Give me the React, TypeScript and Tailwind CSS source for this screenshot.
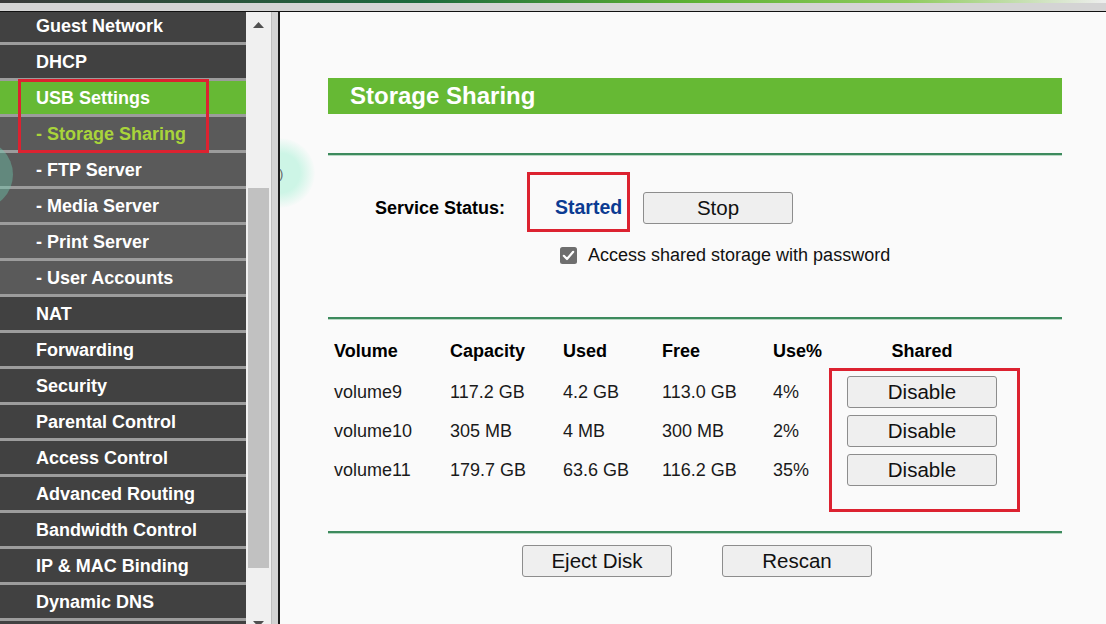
import React from "react";

type Item = { label: string; kind: "main" | "sub" | "green" | "active" };

const items: Item[] = [
  { label: "Guest Network", kind: "main" },
  { label: "DHCP", kind: "main" },
  { label: "USB Settings", kind: "green" },
  { label: "- Storage Sharing", kind: "active" },
  { label: "- FTP Server", kind: "sub" },
  { label: "- Media Server", kind: "sub" },
  { label: "- Print Server", kind: "sub" },
  { label: "- User Accounts", kind: "sub" },
  { label: "NAT", kind: "main" },
  { label: "Forwarding", kind: "main" },
  { label: "Security", kind: "main" },
  { label: "Parental Control", kind: "main" },
  { label: "Access Control", kind: "main" },
  { label: "Advanced Routing", kind: "main" },
  { label: "Bandwidth Control", kind: "main" },
  { label: "IP & MAC Binding", kind: "main" },
  { label: "Dynamic DNS", kind: "main" },
  { label: "", kind: "main" },
];

const kindClass: Record<Item["kind"], string> = {
  main: "bg-[#414141] text-white",
  sub: "bg-[#5a5a5a] text-white",
  green: "bg-[#66b934] text-white",
  active: "bg-[#5a5a5a] text-[#a9d43a]",
};

const rows = [
  ["volume9", "117.2 GB", "4.2 GB", "113.0 GB", "4%"],
  ["volume10", "305 MB", "4 MB", "300 MB", "2%"],
  ["volume11", "179.7 GB", "63.6 GB", "116.2 GB", "35%"],
];

function Rule() {
  return (
    <div className="flex flex-col w-[734px]">
      <div className="h-[2px] bg-[#3d8a5d]" />
      <div className="h-px bg-[#b9d8c4]" />
    </div>
  );
}

function Btn({ children, className = "" }: { children: React.ReactNode; className?: string }) {
  return (
    <button
      className={`w-[150px] h-[32px] bg-[#efefef] border border-[#8d8d8d] rounded-[3px] text-[20.5px] text-[#111] leading-none flex items-center justify-center ${className}`}
    >
      {children}
    </button>
  );
}

export default function App() {
  return (
    <div className="w-[1106px] h-[624px] overflow-hidden flex flex-col bg-[#fafafa] font-['Liberation_Sans',Arial,sans-serif] relative">
      {/* top bar */}
      <div className="h-[3px] bg-[linear-gradient(90deg,#3a3a3a_0%,#1d6a3d_38%,#5cb033_62%,#8fcb5e_82%,#eeeeee_100%)]" />
      <div className="h-[8px] bg-[#d4d4d4]" />
      <div className="h-px bg-[#111]" />

      <div className="flex flex-1 min-h-0">
        {/* sidebar */}
        <div className="w-[246px] overflow-hidden relative">
          <div className="flex flex-col mt-[-3px]">
            {items.map((it, i) => (
              <div
                key={i}
                className={`h-[36px] shrink-0 border-b-[3px] border-[#9c9c9c] flex items-center pl-[36px] pt-[2px] text-[18px] font-bold ${kindClass[it.kind]}`}
              >
                {it.label}
              </div>
            ))}
          </div>
          {/* red annotation */}
          <div className="absolute left-[18px] top-[67px] w-[191px] h-[74px] border-[3px] border-[#dc2230]" />
          {/* floating circle */}
          <div className="absolute left-[-56px] top-[128px] w-[69px] h-[69px] rounded-full bg-[rgba(110,200,175,0.42)]" />
        </div>

        {/* scrollbar */}
        <div className="w-[25px] bg-[#f0f0f0] flex flex-col items-center relative">
          <svg width="11" height="7" viewBox="0 0 11 7" className="mt-[10px]">
            <polygon points="0,6 5.5,0 11,6" fill="#505050" />
          </svg>
          <div className="absolute left-[2px] top-[176px] w-[21px] h-[380px] bg-[#c1c1c1]" />
          <svg width="11" height="7" viewBox="0 0 11 7" className="mt-auto mb-[-4px]">
            <polygon points="0,0 5.5,6 11,0" fill="#505050" />
          </svg>
        </div>
        <div className="w-[7px] bg-[#d2d2d2] border-l border-[#bdbdbd]" />
        <div className="w-[2px] bg-[#1a1a1a]" />

        {/* content */}
        <div className="flex-1 relative overflow-hidden bg-[#fafafa]">
          <div className="absolute left-[-35px] top-[126px] w-[70px] h-[70px] rounded-full bg-[radial-gradient(circle,#cdf5e6_40%,rgba(250,250,250,0)_72%)]" />
          <div className="absolute left-[-1px] top-[155px] text-[13px] text-[#666] leading-none">)</div>

          <div className="relative flex flex-col pl-[48px] pt-[66px]">
            {/* header */}
            <div className="w-[734px] h-[36px] bg-[#66b934] flex items-center pl-[22px] text-white font-bold text-[24px]">
              Storage Sharing
            </div>

            <div className="mt-[39px]">
              <Rule />
            </div>

            {/* service status */}
            <div className="relative mt-[36px] h-[32px] flex items-center pl-[47px]">
              <div className="w-[180px] text-[18px] font-bold text-black">Service Status:</div>
              <div className="w-[88px] text-[19.5px] font-bold text-[#0b3b92]">Started</div>
              <Btn>Stop</Btn>
              <div className="absolute left-[199px] top-[-20px] w-[103px] h-[60px] border-[3px] border-[#dc2230]" />
            </div>

            {/* checkbox */}
            <div className="mt-[21px] h-[20px] flex items-center pl-[232px] gap-[11px]">
              <svg width="17" height="17" viewBox="0 0 17 17">
                <rect x="0" y="0" width="17" height="17" rx="2.5" fill="#6e6e6e" />
                <path d="M3.8 8.8 L7 12 L13.2 4.8" stroke="#fff" strokeWidth="2.2" fill="none" strokeLinecap="round" strokeLinejoin="round" />
              </svg>
              <span className="text-[18px] text-[#111]">Access shared storage with password</span>
            </div>

            <div className="mt-[52px]">
              <Rule />
            </div>

            {/* table */}
            <div className="relative mt-[15px] pl-[6px] w-[734px]">
              <div className="grid grid-cols-[116px_113px_99px_111px_74px_150px] h-[32px] items-center text-[18px] font-bold text-black">
                <div>Volume</div>
                <div>Capacity</div>
                <div>Used</div>
                <div>Free</div>
                <div>Use%</div>
                <div className="text-center">Shared</div>
              </div>
              <div className="flex flex-col gap-[7px] mt-[9px]">
                {rows.map((r) => (
                  <div
                    key={r[0]}
                    className="grid grid-cols-[116px_113px_99px_111px_74px_150px] h-[32px] items-center text-[18px] text-[#1a1a1a]"
                  >
                    {r.map((c, i) => (
                      <div key={i}>{c}</div>
                    ))}
                    <Btn>Disable</Btn>
                  </div>
                ))}
              </div>
              <div className="absolute left-[501px] top-[33px] w-[191px] h-[144px] border-[3px] border-[#dc2230]" />
            </div>

            <div className="mt-[45px]">
              <Rule />
            </div>

            <div className="mt-[11px] flex pl-[194px] gap-[50px]">
              <Btn>Eject Disk</Btn>
              <Btn>Rescan</Btn>
            </div>
          </div>
        </div>
      </div>
    </div>
  );
}
